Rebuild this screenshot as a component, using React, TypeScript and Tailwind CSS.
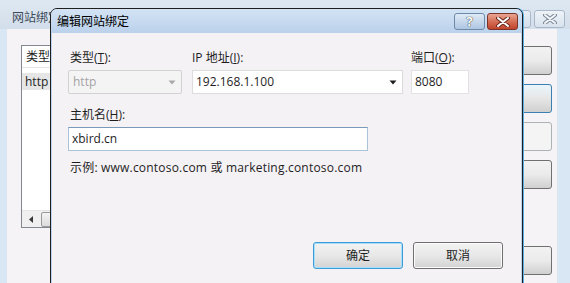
import React from "react";

const font = "font-['Open_Sans','Noto_Sans_CJK_SC',sans-serif]";

function CloseGlyph({ color = "#fff", stroke = "#5a5a5a" }: { color?: string; stroke?: string }) {
  return (
    <svg width="14" height="10" viewBox="0 0 14 10">
      <path d="M2 1 L12 9 M12 1 L2 9" stroke={stroke} strokeWidth="4" strokeLinecap="round" />
      <path d="M2 1 L12 9 M12 1 L2 9" stroke={color} strokeWidth="2" strokeLinecap="round" />
    </svg>
  );
}

function Arrow({ color }: { color: string }) {
  return (
    <svg width="8" height="5" viewBox="0 0 8 5">
      <path d="M0.5 0.5 H7.5 L4 4.5 Z" fill={color} />
    </svg>
  );
}

function Label({ text, k }: { text: string; k: string }) {
  return (
    <div className="h-[16px] leading-[16px] text-[12px] text-[#1e1e1e]">
      {text}(<span className="underline">{k}</span>):
    </div>
  );
}

function BackButton({ cls }: { cls: string }) {
  return <div className={`h-[29px] w-[82px] rounded-[3px] border ${cls}`} />;
}

function BackWindow() {
  return (
    <div className="absolute inset-0 flex flex-col bg-[#d9e7f5]">
      {/* title bar */}
      <div className="h-[29px] flex items-start bg-gradient-to-b from-[#dfe8f2] to-[#d2deea] pl-[12px] pr-[5px]">
        <div className="mt-[10px] text-[12px] leading-[16px] text-[#3c4a5a]">网站绑定</div>
        <div className="ml-auto mt-[10px] flex gap-[3px]">
          <div className="h-[18px] w-[26px] rounded-[3px] border border-[#a9b8c8] bg-gradient-to-b from-[#e9eff6] to-[#d4dfeb]" />
          <div className="h-[18px] w-[31px] rounded-[3px] border border-[#a9b8c8] bg-gradient-to-b from-[#eef3f8] to-[#d8e2ed] flex items-center justify-center">
            <CloseGlyph color="#f4f7fb" stroke="#7b8794" />
          </div>
        </div>
      </div>
      {/* client */}
      <div className="flex-1 mx-[7px] mr-[13px] bg-[#f5f3f6] flex pt-[16px] pl-[14px] pr-[5px]">
        <div className="w-[420px] h-[183px] border border-[#828790] bg-white flex flex-col">
          <div className="h-[22px] flex items-center pl-[4px] text-[12px] text-[#1e1e1e] border-b border-[#e5e5e5]">类型</div>
          <div className="h-[22px] mt-[2px] flex items-center">
            <span className="bg-[#e6e6e6] px-[3px] text-[12px] leading-[17px] text-[#1e1e1e]">http</span>
          </div>
          <div className="mt-auto h-[17px] flex items-center bg-[#f0f0f0] border-t border-[#e6e6e6]">
            <div className="w-[18px] flex justify-center">
              <svg width="4" height="7" viewBox="0 0 4 7"><path d="M4 0 V7 L0 3.5 Z" fill="#3a3a3a" /></svg>
            </div>
            <div className="ml-[1px] h-[15px] w-[60px] rounded-[2px] border border-[#9a9a9a] bg-gradient-to-b from-[#f4f4f4] to-[#dcdcdc]" />
          </div>
        </div>
        <div className="ml-auto flex flex-col pt-[1px]">
          <BackButton cls="border-[#707070] bg-gradient-to-b from-[#f2f2f2] via-[#ebebeb] to-[#d0d0d0]" />
          <div className="h-[9px]" />
          <BackButton cls="border-[#3c7fb1] bg-gradient-to-b from-[#eaf6fd] via-[#e6e6e6] to-[#d0d0d0]" />
          <div className="h-[9px]" />
          <BackButton cls="border-[#adb2b5] bg-[#f4f4f4]" />
          <div className="h-[9px]" />
          <BackButton cls="border-[#707070] bg-gradient-to-b from-[#f2f2f2] via-[#ebebeb] to-[#d0d0d0]" />
          <div className="h-[57px]" />
          <BackButton cls="border-[#707070] bg-gradient-to-b from-[#f2f2f2] via-[#ebebeb] to-[#d0d0d0]" />
        </div>
      </div>
    </div>
  );
}

function Dialog() {
  return (
    <div className="absolute left-[50px] top-[8px] w-[473px] h-[290px] rounded-t-[7px] border border-[#1f1f1f] bg-[#bed3ec] shadow-[1px_0_0_#5aaee6] flex flex-col overflow-hidden">
      {/* title bar */}
      <div className="h-[24px] flex items-start bg-gradient-to-b from-[#d3e3f4] to-[#bbd1eb] pl-[6px] pr-[4px]">
        <div className="mt-[4px] text-[12px] leading-[17px] text-black">编辑网站绑定</div>
        <div className="ml-auto mt-[4px] flex gap-[2px]">
          <div className="h-[17px] w-[31px] rounded-[3px] border border-[#6f8aa8] bg-gradient-to-b from-[#dfeaf6] via-[#c7d8ec] to-[#aec5e1] flex items-center justify-center">
            <span className="text-[13px] font-bold leading-none text-white [text-shadow:0_0_1px_#333,0_0_1px_#333]">?</span>
          </div>
          <div className="h-[17px] w-[31px] rounded-[3px] border border-[#7a3428] bg-gradient-to-b from-[#e9a593] via-[#d56e55] to-[#c0432b] flex items-center justify-center">
            <CloseGlyph color="#ffffff" stroke="#6b2a20" />
          </div>
        </div>
      </div>
      {/* client */}
      <div className="flex-1 mx-[1px] bg-[#f5f2f5] pl-[16px] pt-[17px] flex flex-col">
        <div className="flex gap-[10px]">
          <div className="flex flex-col w-[114px]">
            <div className="pl-[2px]"><Label text="类型" k="T" /></div>
            <div className="mt-[4px] h-[24px] rounded-[2px] border border-[#d2d2d2] bg-[#f5f4f5] flex items-center pl-[4px] pr-[5px]">
              <span className="text-[12px] text-[#a3a3a3]">http</span>
              <span className="ml-auto flex"><Arrow color="#a8a8a8" /></span>
            </div>
          </div>
          <div className="flex flex-col w-[211px]">
            <Label text="IP 地址" k="I" />
            <div className="mt-[4px] h-[24px] border border-[#dcdcdc] bg-white flex items-center pl-[3px] pr-[5px]">
              <span className="text-[12px] text-[#1e1e1e]">192.168.1.100</span>
              <span className="ml-auto flex"><Arrow color="#1e1e1e" /></span>
            </div>
          </div>
          <div className="flex flex-col w-[58px] -ml-[2px]">
            <Label text="端口" k="O" />
            <div className="mt-[4px] h-[24px] border border-[#e2e2e2] bg-white flex items-center pl-[3px]">
              <span className="text-[12px] text-[#1e1e1e]">8080</span>
            </div>
          </div>
        </div>
        <div className="mt-[13px] pl-[2px]"><Label text="主机名" k="H" /></div>
        <div className="mt-[4px] w-[300px] h-[24px] border border-[#abc3d9] border-t-[#7a98b8] bg-white flex items-center pl-[3px]">
          <span className="text-[12px] text-[#1e1e1e]">xbird.cn</span>
        </div>
        <div className="mt-[9px] pl-[2px] h-[16px] leading-[16px] text-[12px] tracking-[0.2px] text-[#1e1e1e]">
          示例: www.contoso.com 或 marketing.contoso.com
        </div>
        <div className="mt-[66px] flex gap-[10px] pl-[245px]">
          <div className="h-[27px] w-[90px] rounded-[3px] border border-[#3c9ad8] bg-gradient-to-b from-[#f3f3f3] via-[#e8e8e8] to-[#d3d3d3] shadow-[inset_0_0_0_1px_#a6e0fb] flex items-center justify-center text-[12px] text-[#1e1e1e]">
            确定
          </div>
          <div className="h-[27px] w-[90px] rounded-[3px] border border-[#707070] bg-gradient-to-b from-[#f3f3f3] via-[#e8e8e8] to-[#d3d3d3] shadow-[inset_0_0_0_1px_#fbfbfb] flex items-center justify-center text-[12px] text-[#1e1e1e]">
            取消
          </div>
        </div>
      </div>
    </div>
  );
}

export default function App() {
  return (
    <div className={`relative w-[570px] h-[283px] overflow-hidden ${font}`}>
      <BackWindow />
      <Dialog />
    </div>
  );
}
